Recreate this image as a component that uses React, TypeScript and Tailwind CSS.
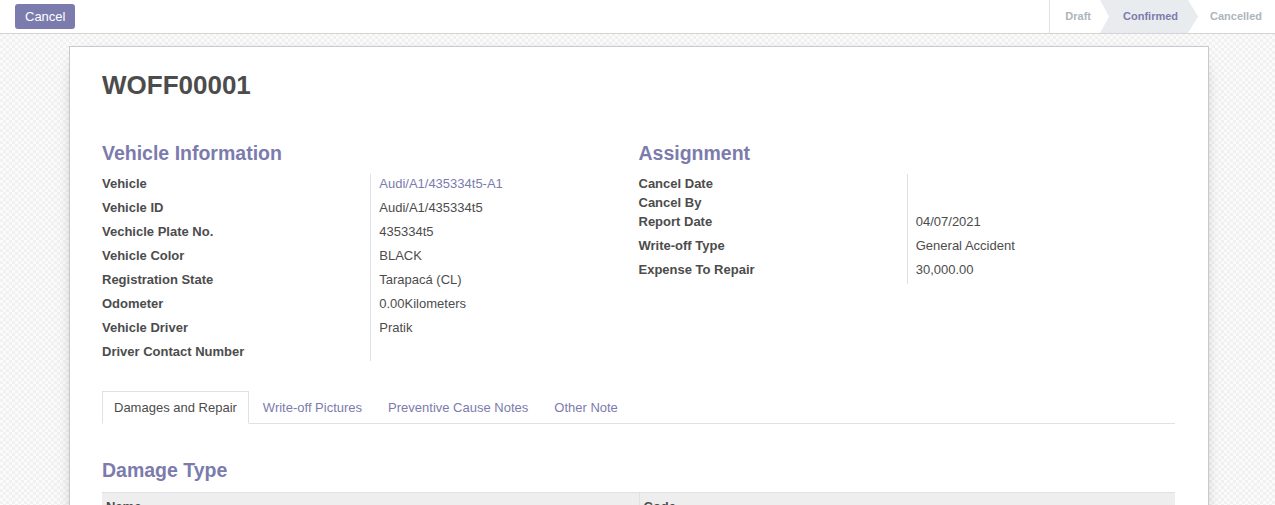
import React from "react";

type Row = { label: string; value?: string; link?: boolean; tall?: boolean };

const leftRows: Row[] = [
  { label: "Vehicle", value: "Audi/A1/435334t5-A1", link: true, tall: true },
  { label: "Vehicle ID", value: "Audi/A1/435334t5", tall: true },
  { label: "Vechicle Plate No.", value: "435334t5", tall: true },
  { label: "Vehicle Color", value: "BLACK", tall: true },
  { label: "Registration State", value: "Tarapacá (CL)", tall: true },
  { label: "Odometer", value: "0.00Kilometers", tall: true },
  { label: "Vehicle Driver", value: "Pratik", tall: true },
  { label: "Driver Contact Number" },
];

const rightRows: Row[] = [
  { label: "Cancel Date" },
  { label: "Cancel By" },
  { label: "Report Date", value: "04/07/2021", tall: true },
  { label: "Write-off Type", value: "General Accident", tall: true },
  { label: "Expense To Repair", value: "30,000.00", tall: true },
];

function Group({ title, rows }: { title: string; rows: Row[] }) {
  return (
    <div>
      <div className="text-[19.5px] leading-[24px] font-bold text-[#7c7bad] mb-[9px]">{title}</div>
      <div>
        {rows.map((r) => (
          <div
            key={r.label}
            className={`grid grid-cols-2 leading-[19px] ${r.tall ? "h-[24px]" : "h-[19px]"}`}
          >
            <div className="font-bold text-[#4c4c4c] whitespace-nowrap">{r.label}</div>
            <div
              className={`border-l border-[#dee2e6] pl-2 whitespace-nowrap ${
                r.link ? "text-[#7c7bad]" : "text-[#4c4c4c]"
              }`}
            >
              {r.value ?? ""}
            </div>
          </div>
        ))}
      </div>
    </div>
  );
}

export default function App() {
  const tabs = ["Damages and Repair", "Write-off Pictures", "Preventive Cause Notes", "Other Note"];
  return (
    <div className="h-screen w-full overflow-hidden flex flex-col font-['Liberation_Sans',Arial,sans-serif] text-[13px] text-[#4c4c4c] bg-[#f6f6f6] bg-[image:repeating-conic-gradient(#f1f1f1_0%_25%,#fbfbfb_0%_50%)] bg-[length:6px_6px]">
      <div className="h-[34px] shrink-0 bg-white border-b border-[#d4d4d4] flex items-stretch justify-between">
        <div className="pl-[15px] flex items-center">
          <button className="h-[25px] px-[10px] rounded-[3px] bg-[#7c7bad] text-white text-[13px] leading-[25px]">
            Cancel
          </button>
        </div>
        <div className="flex border-l border-[#dee2e6] text-[11px] font-bold">
          <div className="flex items-center pl-[15px] pr-[9px] text-[#adb5bd]">Draft</div>
          <div className="flex items-center w-[98px] pl-[23px] bg-[#e9ecef] text-[#7c7bad] [clip-path:polygon(0_0,88px_0,98px_50%,88px_100%,0_100%,9px_50%)]">
            Confirmed
          </div>
          <div className="flex items-center pl-[12px] pr-[13px] text-[#adb5bd]">Cancelled</div>
        </div>
      </div>

      <div className="flex-1 pt-3 pl-[69px]">
        <div className="w-[1140px] min-h-[620px] bg-white border border-[#c8c8d3] shadow-[0_5px_20px_-15px_black] pt-[23px] pl-8 pr-[33px] pb-8">
          <h1 className="text-[26px] leading-[31px] font-bold text-[#4c4c4c]">WOFF00001</h1>

          <div className="grid grid-cols-2 mt-[40px]">
            <Group title="Vehicle Information" rows={leftRows} />
            <Group title="Assignment" rows={rightRows} />
          </div>

          <div className="mt-[30px] flex border-b border-[#dee2e6]">
            {tabs.map((t, i) => (
              <div
                key={t}
                className={`mr-[2px] -mb-px px-[11px] py-[6px] leading-[19px] border whitespace-nowrap ${
                  i === 0
                    ? "border-[#dee2e6] border-b-white bg-white text-[#4c4c4c]"
                    : "border-transparent text-[#7c7bad]"
                }`}
              >
                {t}
              </div>
            ))}
          </div>

          <div className="mt-[34px] text-[19.5px] leading-[24px] font-bold text-[#7c7bad]">Damage Type</div>

          <div className="mt-[10px] border-t border-[#dee2e6] bg-[#eeeeee] grid grid-cols-2 font-bold leading-[19px]">
            <div className="pl-1 pt-[4px] pb-[6px]">Name</div>
            <div className="pl-1 pt-[4px] pb-[6px] border-l border-[#dee2e6]">Code</div>
          </div>
        </div>
      </div>
    </div>
  );
}
